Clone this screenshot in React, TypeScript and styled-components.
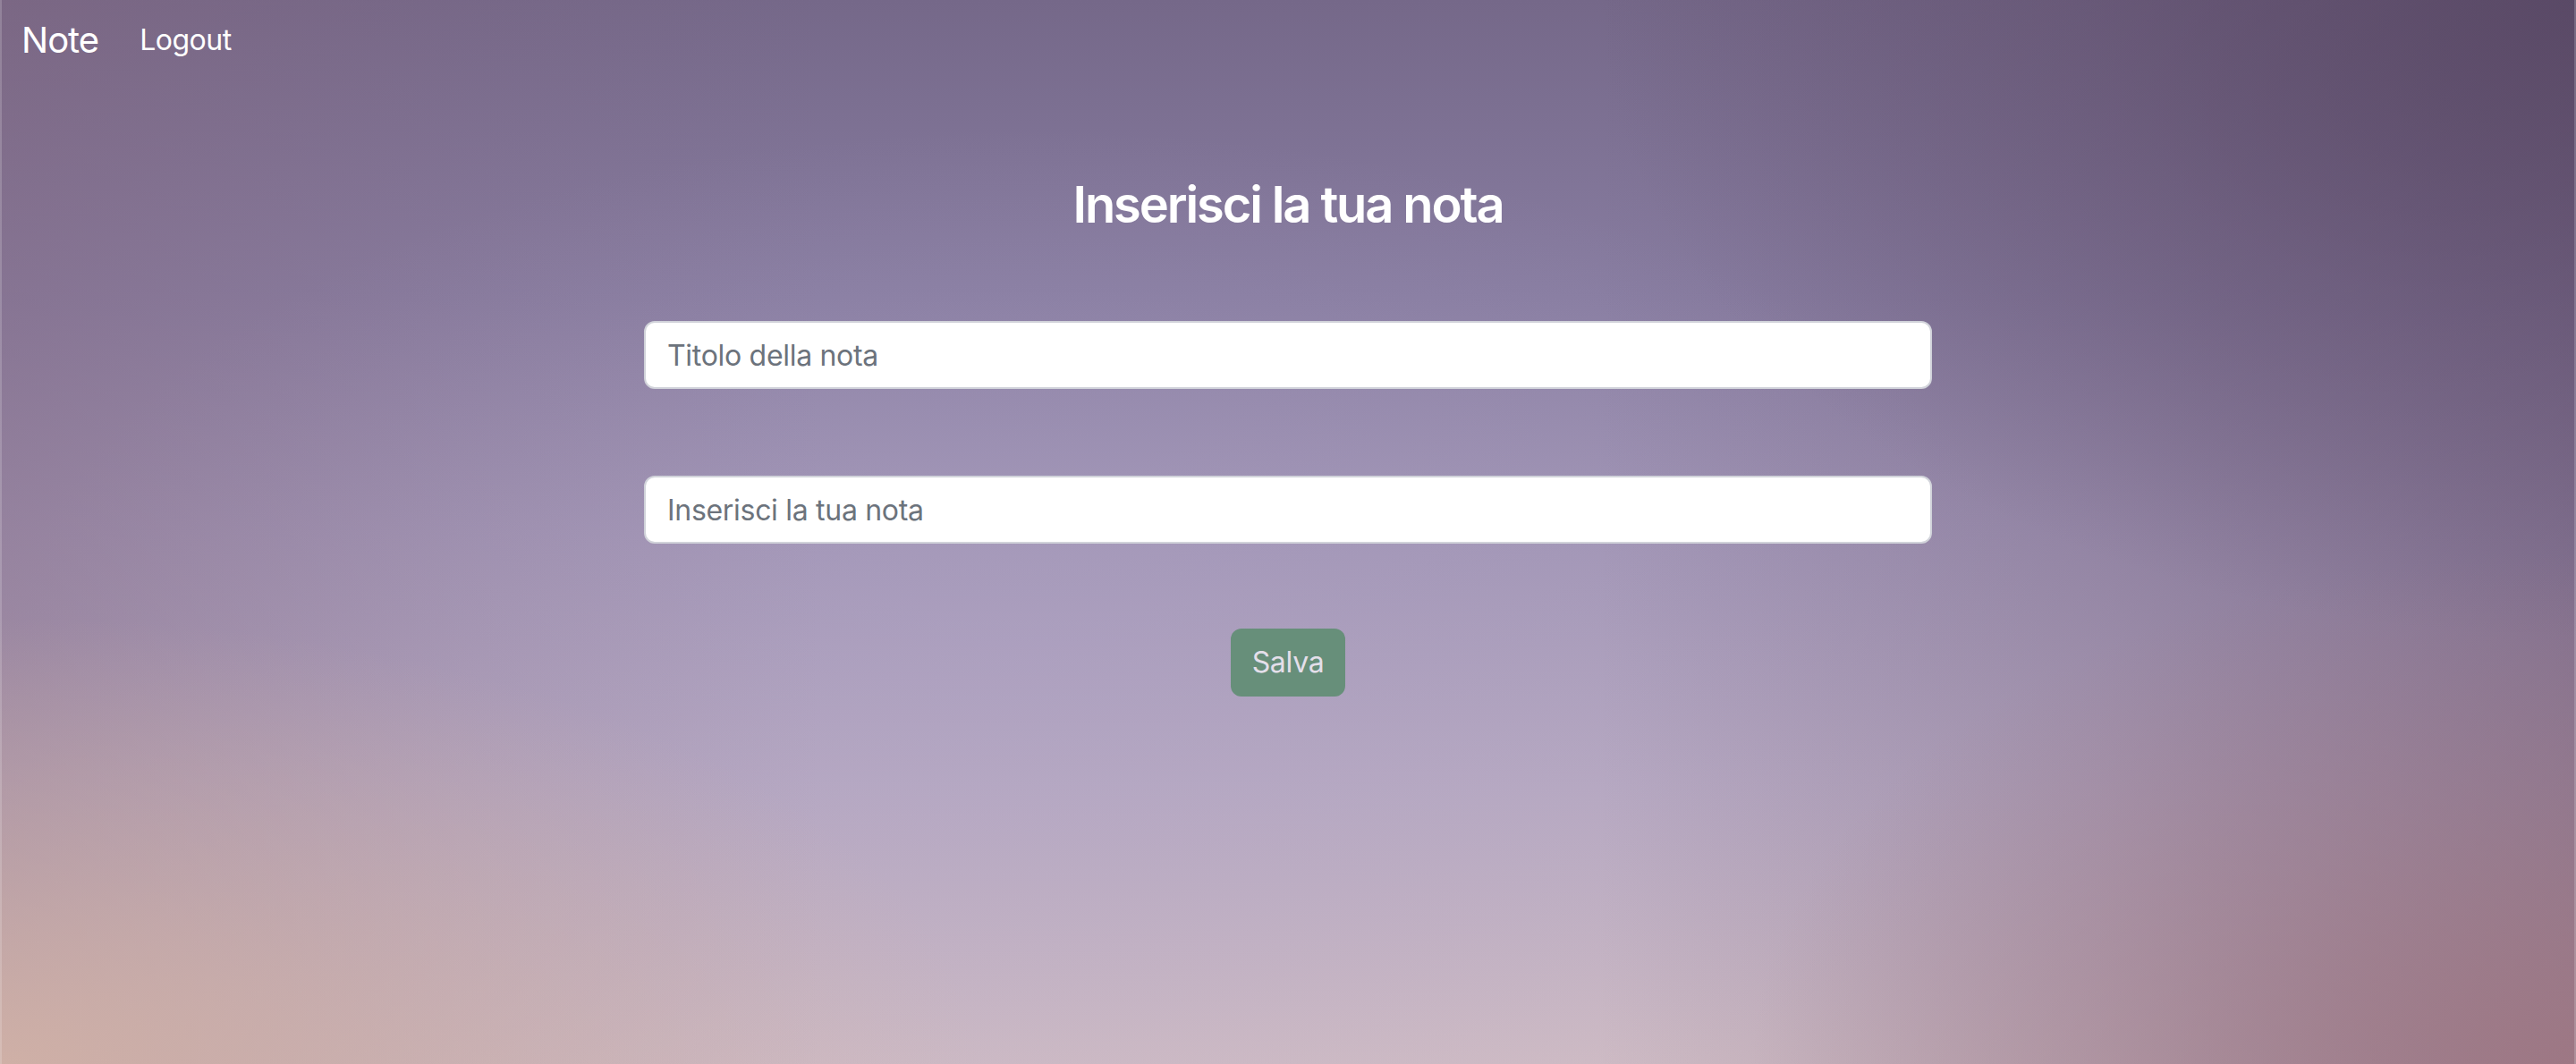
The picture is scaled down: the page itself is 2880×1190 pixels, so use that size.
import React from "react";
import styled, { createGlobalStyle } from "styled-components";

const GlobalStyle = createGlobalStyle`
  * { box-sizing: border-box; }
  html, body { margin: 0; padding: 0; }
  body {
    font-family: Inter, "Noto Sans", "Liberation Sans", sans-serif;
    min-height: 1190px;
  }
`;

const Page = styled.div`
  min-height: 1190px;
  width: 100%;
  box-shadow: inset 2px 0 0 rgba(255, 255, 255, 0.18), inset -2px 0 0 rgba(255, 255, 255, 0.18);
  background:
    radial-gradient(ellipse 38% 42% at 0% 100%, rgba(210, 178, 166, 0.9), rgba(210, 178, 166, 0.45) 45%, rgba(210, 178, 166, 0) 100%),
    radial-gradient(ellipse 32% 48% at 100% 100%, rgba(158, 118, 130, 0.9), rgba(158, 118, 130, 0.4) 50%, rgba(158, 118, 130, 0) 100%),
    radial-gradient(ellipse 38% 60% at 100% 0%, rgba(84, 68, 96, 0.75), rgba(84, 68, 96, 0.3) 50%, rgba(84, 68, 96, 0) 100%),
    linear-gradient(to left, rgba(96, 74, 104, 0.5) 0%, rgba(96, 74, 104, 0.22) 18%, rgba(96, 74, 104, 0) 38%),
    linear-gradient(to right, rgba(132, 102, 124, 0.38) 0%, rgba(132, 102, 124, 0.13) 18%, rgba(132, 102, 124, 0) 32%),
    radial-gradient(ellipse 40% 50% at 40% 62%, rgba(176, 164, 200, 0.35), rgba(176, 164, 200, 0) 100%),
    linear-gradient(180deg, #756889 0%, #887da1 28%, #a094b4 50%, #b7a9c1 74%, #cebbc4 100%);
`;

const NavBar = styled.nav`
  display: flex;
  align-items: center;
  padding: 15px 24px 5px;
`;

const Brand = styled.a`
  color: #fff;
  font-size: 40px;
  line-height: 60px;
  text-decoration: none;
  margin-right: 30px;
  letter-spacing: -1px;
`;

const NavLink = styled.a`
  color: #fff;
  font-size: 32px;
  line-height: 48px;
  padding: 0 16px;
  text-decoration: none;
  letter-spacing: -0.5px;
`;

const Main = styled.main`
  display: flex;
  flex-direction: column;
  align-items: center;
  padding-top: 116px;
`;

const Title = styled.h3`
  margin: 0 0 96px;
  color: #fff;
  font-size: 56px;
  line-height: 67px;
  font-weight: 600;
  letter-spacing: -2.1px;
`;

const Form = styled.form`
  width: 50%;
  display: flex;
  flex-direction: column;
  align-items: center;
  gap: 97px;
`;

const Input = styled.input`
  width: 100%;
  height: 76px;
  padding: 12px 24px;
  font-family: inherit;
  font-size: 32px;
  line-height: 48px;
  color: #212529;
  background: #fff;
  border: 2px solid #d1d3da;
  border-radius: 12px;
  outline: none;
  letter-spacing: -0.3px;
  &::placeholder {
    color: #6c737c;
  }
`;

const Button = styled.button`
  height: 76px;
  padding: 0 24px;
  font-family: inherit;
  font-size: 32px;
  line-height: 48px;
  color: #e4dfea;
  background: #678f7a;
  border: none;
  border-radius: 12px;
  letter-spacing: -0.3px;
  margin-top: -2px;
`;

export default function App() {
  return (
    <>
      <GlobalStyle />
      <Page>
        <NavBar>
          <Brand href="#">Note</Brand>
          <NavLink href="#">Logout</NavLink>
        </NavBar>
        <Main>
          <Title>Inserisci la tua nota</Title>
          <Form onSubmit={(e) => e.preventDefault()}>
            <Input placeholder="Titolo della nota" />
            <Input placeholder="Inserisci la tua nota" />
            <Button type="submit">Salva</Button>
          </Form>
        </Main>
      </Page>
    </>
  );
}
